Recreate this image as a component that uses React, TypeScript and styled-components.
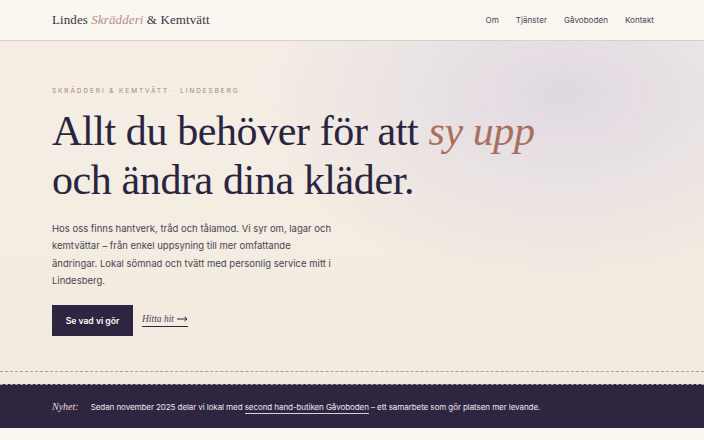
import styled, { createGlobalStyle } from 'styled-components';

const GlobalStyle = createGlobalStyle`
  html, body {
    margin: 0;
    padding: 0;
    background: #faf6ef;
  }
  body {
    font-family: Inter, "Noto Sans", sans-serif;
    color: #2e2540;
  }
`;

const serif = `"Liberation Serif", "DejaVu Serif", serif`;

const Page = styled.div`
  width: 704px;
  min-height: 440px;
  background: #faf6ef;
`;

const Header = styled.header`
  height: 40px;
  display: flex;
  align-items: center;
  justify-content: space-between;
  padding: 0 50px 0 52px;
  background: #faf7f1;
  border-bottom: 1px solid #d9d1bd;
`;

const Logo = styled.a`
  font-family: ${serif};
  font-size: 13px;
  color: #3a3344;
  text-decoration: none;
  letter-spacing: 0.1px;
  em {
    color: #b98a84;
  }
`;

const Nav = styled.nav`
  display: flex;
  gap: 17px;
`;

const NavLink = styled.a`
  font-size: 8.1px;
  color: #4a4452;
  text-decoration: none;
`;

const Hero = styled.section`
  padding: 46px 52px 0;
  height: 330px;
  box-sizing: border-box;
  background:
    radial-gradient(ellipse 440px 270px at 80% 16%, rgba(222, 214, 226, 0.9), rgba(222, 214, 226, 0) 70%),
    linear-gradient(180deg, #f4eee5 0%, #f2ebdf 100%);
`;

const Eyebrow = styled.p`
  margin: 0;
  font-size: 6.5px;
  letter-spacing: 1.9px;
  text-transform: uppercase;
  color: #a98471;
`;

const Title = styled.h1`
  margin: 12px 0 0;
  font-family: ${serif};
  font-weight: 400;
  font-size: 42px;
  line-height: 49px;
  letter-spacing: -0.4px;
  color: #2b2440;
  em {
    color: #a8705a;
  }
`;

const Lead = styled.p`
  margin: 15px 0 0;
  max-width: 282px;
  font-size: 9.5px;
  line-height: 17.3px;
  color: #4b4452;
`;

const Actions = styled.div`
  display: flex;
  align-items: center;
  gap: 9px;
  margin-top: 16px;
`;

const Primary = styled.a`
  width: 81px;
  height: 31px;
  display: flex;
  align-items: center;
  justify-content: center;
  background: #2e2540;
  color: #fff;
  font-size: 8.6px;
  font-weight: 600;
  text-decoration: none;
`;

const Secondary = styled.a`
  font-family: ${serif};
  font-style: italic;
  font-size: 9.5px;
  color: #4a4452;
  text-decoration: none;
  padding-bottom: 2px;
  border-bottom: 1px solid #2e2540;
  display: flex;
  align-items: center;
  gap: 3px;
`;

const Stitch = styled.div`
  height: 12px;
  background: #f1eadf;
  border-top: 1px dashed #a69bae;
`;

const Banner = styled.div`
  display: flex;
  align-items: center;
  gap: 12px;
  height: 44px;
  padding: 0 52px;
  background: #2e2540;
  border-top: 1px dashed #a59abb;
  box-sizing: border-box;
  font-size: 8.1px;
  letter-spacing: -0.12px;
  color: #ece6ee;
`;

const Tag = styled.span`
  font-family: ${serif};
  font-style: italic;
  font-size: 10px;
  letter-spacing: 0;
  color: #eadbd6;
`;

const BannerLink = styled.a`
  color: inherit;
  text-decoration: none;
  border-bottom: 1px solid #d8cfdc;
  padding-bottom: 1px;
`;

export default function App() {
  return (
    <Page>
      <GlobalStyle />
      <Header>
        <Logo href="#">
          Lindes <em>Skrädderi</em> &amp; Kemtvätt
        </Logo>
        <Nav>
          <NavLink href="#">Om</NavLink>
          <NavLink href="#">Tjänster</NavLink>
          <NavLink href="#">Gåvoboden</NavLink>
          <NavLink href="#">Kontakt</NavLink>
        </Nav>
      </Header>
      <Hero>
        <Eyebrow>Skrädderi &amp; Kemtvätt · Lindesberg</Eyebrow>
        <Title>
          Allt du behöver för att <em>sy upp</em>
          <br />
          och ändra dina kläder.
        </Title>
        <Lead>
          Hos oss finns hantverk, tråd och tålamod. Vi syr om, lagar och kemtvättar – från enkel
          uppsyning till mer omfattande ändringar. Lokal sömnad och tvätt med personlig service
          mitt i Lindesberg.
        </Lead>
        <Actions>
          <Primary href="#">Se vad vi gör</Primary>
          <Secondary href="#">
            Hitta hit
            <svg width="11" height="6" viewBox="0 0 11 6" fill="none">
              <path d="M0 3h10M7.5 0.8L10 3 7.5 5.2" stroke="#2e2540" strokeWidth="1" />
            </svg>
          </Secondary>
        </Actions>
      </Hero>
      <Stitch />
      <Banner>
        <Tag>Nyhet:</Tag>
        <span>
          Sedan november 2025 delar vi lokal med <BannerLink href="#">second hand-butiken Gåvoboden</BannerLink> – ett
          samarbete som gör platsen mer levande.
        </span>
      </Banner>
    </Page>
  );
}
